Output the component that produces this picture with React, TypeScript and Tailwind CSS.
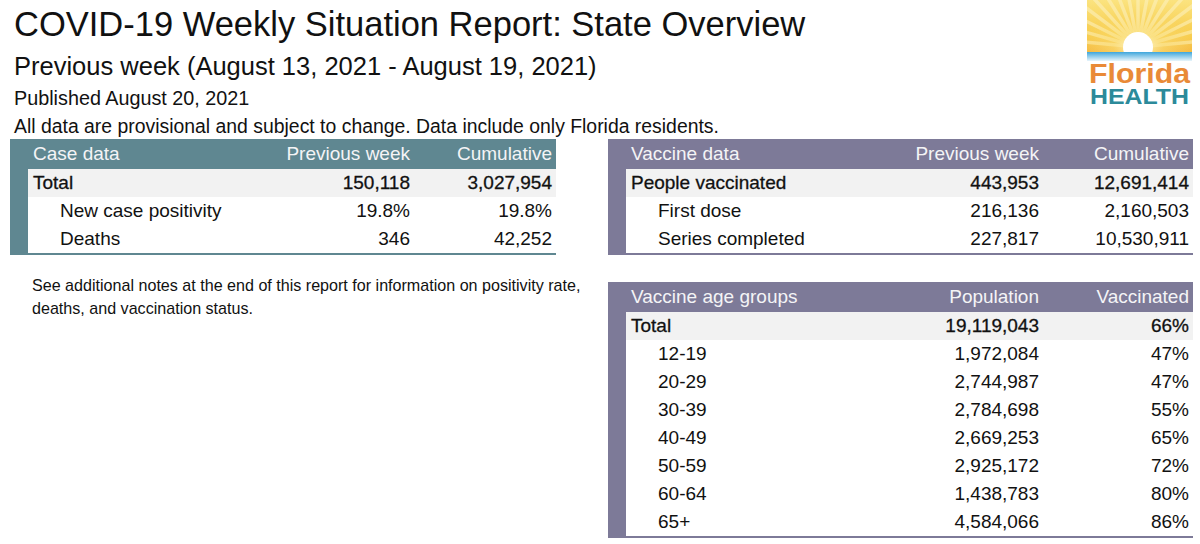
const FONT = { fontFamily: '"Liberation Sans", Arial, sans-serif' };

type Row = { label: string; a: string; b: string; total?: boolean };

const caseRows: Row[] = [
  { label: "Total", a: "150,118", b: "3,027,954", total: true },
  { label: "New case positivity", a: "19.8%", b: "19.8%" },
  { label: "Deaths", a: "346", b: "42,252" },
];

const vaccineRows: Row[] = [
  { label: "People vaccinated", a: "443,953", b: "12,691,414", total: true },
  { label: "First dose", a: "216,136", b: "2,160,503" },
  { label: "Series completed", a: "227,817", b: "10,530,911" },
];

const ageRows: Row[] = [
  { label: "Total", a: "19,119,043", b: "66%", total: true },
  { label: "12-19", a: "1,972,084", b: "47%" },
  { label: "20-29", a: "2,744,987", b: "47%" },
  { label: "30-39", a: "2,784,698", b: "55%" },
  { label: "40-49", a: "2,669,253", b: "65%" },
  { label: "50-59", a: "2,925,172", b: "72%" },
  { label: "60-64", a: "1,438,783", b: "80%" },
  { label: "65+", a: "4,584,066", b: "86%" },
];

function DataTable({
  heads,
  rows,
  color,
  cols,
}: {
  heads: string[];
  rows: Row[];
  color: string;
  cols: string;
}) {
  return (
    <div className={`pl-[18px] pb-[2px] ${color}`}>
      <div
        className={`grid ${cols} h-[30px] items-center pr-[4px] text-[19px] text-[#f4f4f6]`}
      >
        <div className="pl-[5px]">{heads[0]}</div>
        <div className="text-right">{heads[1]}</div>
        <div className="text-right">{heads[2]}</div>
      </div>

      {rows.map((row) => (
        <div
          key={row.label}
          className={`grid ${cols} h-[28px] items-center pr-[4px] text-[19px] text-[#111] ${
            row.total
              ? "bg-[#f2f2f2] [-webkit-text-stroke:0.3px_#111]"
              : "bg-white"
          }`}
        >
          <div className={row.total ? "pl-[5px]" : "pl-[32px]"}>
            {row.label}
          </div>
          <div className="text-right">{row.a}</div>
          <div className="text-right">{row.b}</div>
        </div>
      ))}
    </div>
  );
}

function FloridaLogo() {
  const rays = Array.from({ length: 17 }, (_, i) => {
    const angle = Math.PI + (Math.PI * (i + 0.5)) / 17;
    return {
      x: 51 + Math.cos(angle) * 95,
      y: 47 + Math.sin(angle) * 95,
    };
  });

  return (
    <svg width="105" height="110" viewBox="0 0 105 110">
      <defs>
        <linearGradient id="sky" x1="0" y1="0" x2="0" y2="1">
          <stop offset="0" stopColor="#fbe37f" />
          <stop offset="0.7" stopColor="#f7cb4a" />
          <stop offset="1" stopColor="#f4b43a" />
        </linearGradient>
        <radialGradient id="glow" cx="0.49" cy="0.9" r="0.6">
          <stop offset="0" stopColor="#fff6cf" />
          <stop offset="0.4" stopColor="#fbe07a" stopOpacity="0.6" />
          <stop offset="1" stopColor="#fbe07a" stopOpacity="0" />
        </radialGradient>
        <linearGradient id="sea" x1="0" y1="0" x2="0" y2="1">
          <stop offset="0" stopColor="#3ea6dc" />
          <stop offset="1" stopColor="#e8f5fb" />
        </linearGradient>
        <clipPath id="skyClip">
          <rect x="0" y="0" width="105" height="52" />
        </clipPath>
      </defs>
      <g clipPath="url(#skyClip)">
        <rect x="0" y="0" width="105" height="52" fill="url(#sky)" />
        {rays.map((ray, i) => (
          <line
            key={i}
            x1="51"
            y1="47"
            x2={ray.x}
            y2={ray.y}
            stroke="#fdf1bd"
            strokeWidth="3.5"
            opacity="0.6"
          />
        ))}
        <rect x="0" y="0" width="105" height="52" fill="url(#glow)" />
        <circle cx="51" cy="47" r="15" fill="#ffffff" />
      </g>
      <rect x="0" y="52" width="105" height="9" fill="url(#sea)" />
      <text
        x="2"
        y="83"
        fontSize="28"
        fontWeight="700"
        fill="#e98a37"
        fontFamily='"Liberation Sans", Arial, sans-serif'
        textLength="101"
        lengthAdjust="spacingAndGlyphs"
      >
        Florida
      </text>
      <text
        x="3"
        y="104"
        fontSize="22"
        fontWeight="700"
        fill="#2c8a9a"
        fontFamily='"Liberation Sans", Arial, sans-serif'
        textLength="99"
        lengthAdjust="spacingAndGlyphs"
      >
        HEALTH
      </text>
    </svg>
  );
}

function App() {
  return (
    <div
      className="h-[544px] w-[1200px] overflow-hidden bg-white text-[#111]"
      style={FONT}
    >
      <div className="flex h-[139px] justify-between pr-[8px]">
        <div className="pl-[14px] pt-[4px]">
          <h1 className="text-[34.5px] leading-[40px]">
            COVID-19 Weekly Situation Report: State Overview
          </h1>
          <p className="mt-[6px] text-[25.5px] leading-[32px]">
            Previous week (August 13, 2021 - August 19, 2021)
          </p>
          <p className="mt-[2px] text-[19.8px] leading-[28px]">
            Published August 20, 2021
          </p>
          <p className="mt-[1px] text-[19.4px] leading-[26px]">
            All data are provisional and subject to change. Data include only
            Florida residents.
          </p>
        </div>
        <FloridaLogo />
      </div>

      <div className="flex gap-[52px] pl-[10px]">
        <div className="w-[546px]">
          <DataTable
            heads={["Case data", "Previous week", "Cumulative"]}
            rows={caseRows}
            color="bg-[#5f8791]"
            cols="grid-cols-[1fr_150px_142px]"
          />
          <p className="mt-[19px] w-[575px] pl-[22px] text-[16.1px] leading-[23px]">
            See additional notes at the end of this report for information on
            positivity rate, deaths, and vaccination status.
          </p>
        </div>

        <div className="w-[585px]">
          <DataTable
            heads={["Vaccine data", "Previous week", "Cumulative"]}
            rows={vaccineRows}
            color="bg-[#7d7a98]"
            cols="grid-cols-[1fr_150px_150px]"
          />
          <div className="mt-[27px]">
            <DataTable
              heads={["Vaccine age groups", "Population", "Vaccinated"]}
              rows={ageRows}
              color="bg-[#7d7a98]"
              cols="grid-cols-[1fr_150px_150px]"
            />
          </div>
        </div>
      </div>
    </div>
  );
}

export default App;
